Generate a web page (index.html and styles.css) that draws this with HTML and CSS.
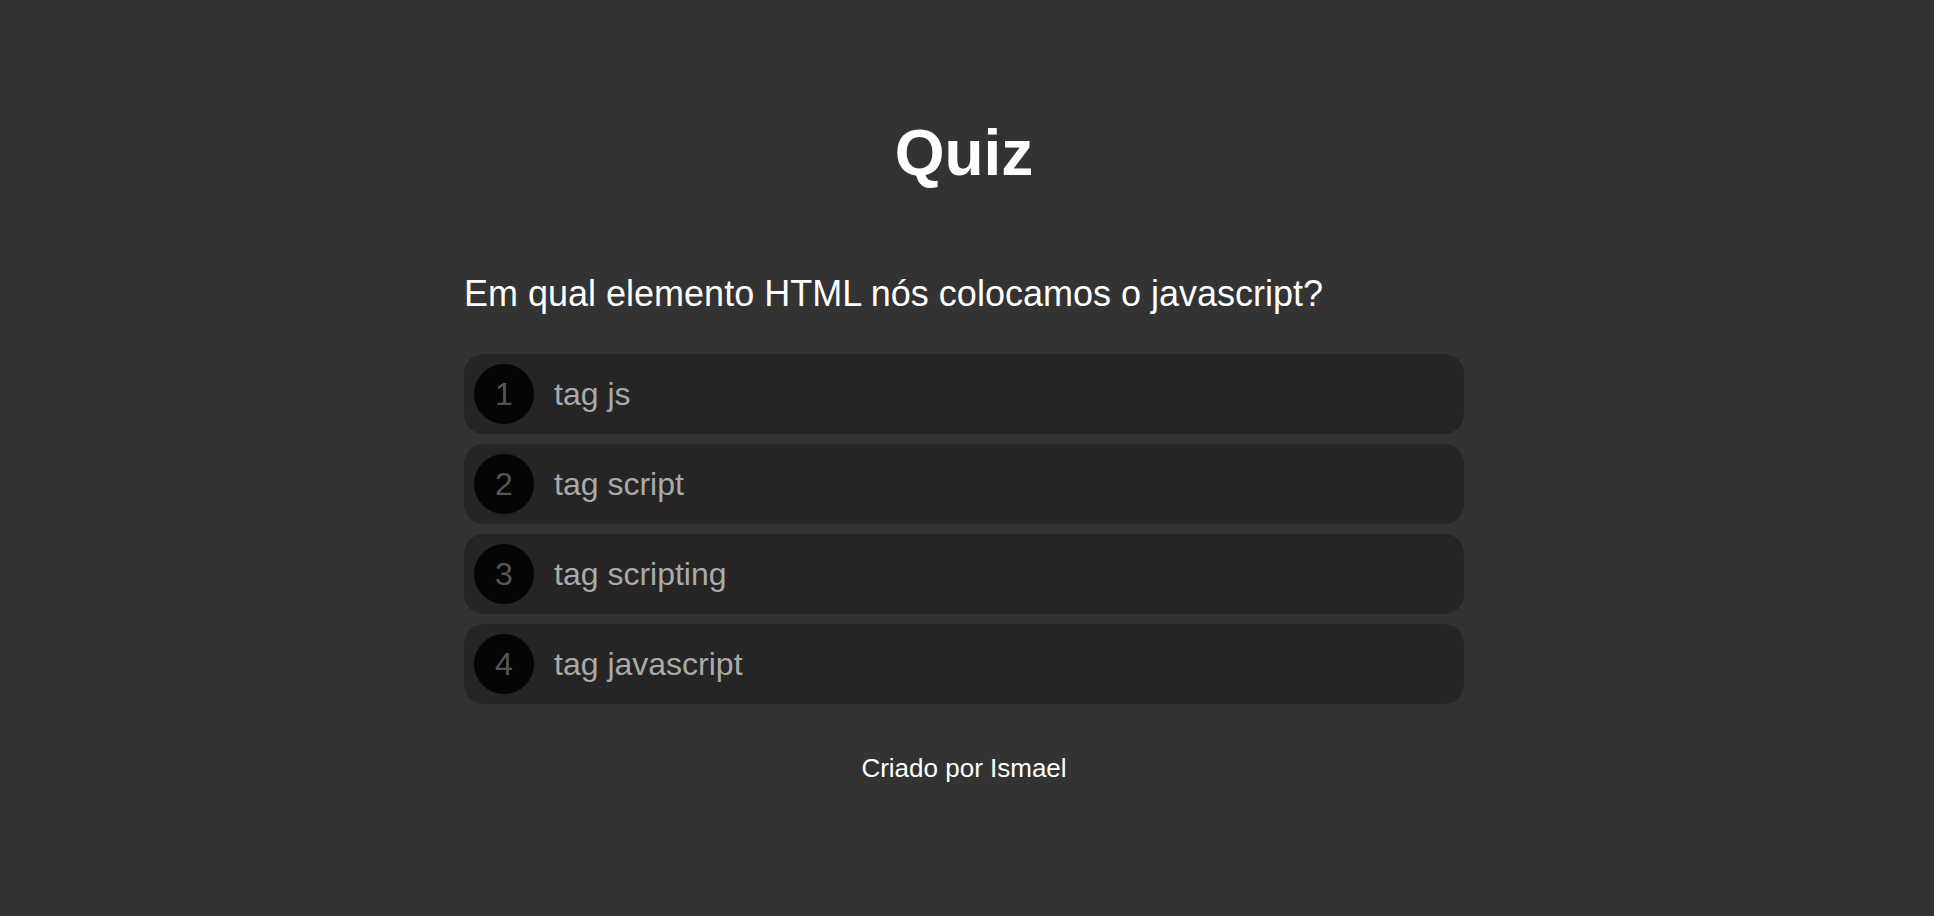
FILE: index.html
```html
<!DOCTYPE html>
<html lang="pt-BR">
<head>
<meta charset="utf-8">
<title>Quiz</title>
<link rel="stylesheet" href="styles.css">
</head>
<body>
<main class="quiz">
  <h1 class="quiz-title">Quiz</h1>
  <p class="question">Em qual elemento HTML nós colocamos o javascript?</p>
  <ul class="options">
    <li class="option"><span class="option-num">1</span><span class="option-text">tag js</span></li>
    <li class="option"><span class="option-num">2</span><span class="option-text">tag script</span></li>
    <li class="option"><span class="option-num">3</span><span class="option-text">tag scripting</span></li>
    <li class="option"><span class="option-num">4</span><span class="option-text">tag javascript</span></li>
  </ul>
  <footer class="footer">Criado por Ismael</footer>
</main>
</body>
</html>
```
FILE: styles.css
```css
html, body {
  margin: 0;
  padding: 0;
  background: #333333;
  font-family: "Liberation Sans", Arial, sans-serif;
  color: #ffffff;
}
body {
  min-height: 916px;
  padding-right: 6px;
}
.quiz {
  width: 1000px;
  margin: 0 auto;
  padding-top: 116px;
  display: flex;
  flex-direction: column;
}
.quiz-title {
  margin: 0;
  font-size: 64px;
  line-height: 74px;
  font-weight: bold;
  text-align: center;
}
.question {
  margin: 83px 0 0;
  font-size: 36px;
  line-height: 41px;
}
.options {
  list-style: none;
  margin: 40px 0 0;
  padding: 0;
  display: flex;
  flex-direction: column;
  gap: 10px;
}
.option {
  height: 80px;
  box-sizing: border-box;
  padding: 10px;
  background: #252525;
  border-radius: 20px;
  display: flex;
  align-items: center;
  gap: 20px;
}
.option-num {
  width: 60px;
  height: 60px;
  border-radius: 50%;
  background: #050505;
  color: #555555;
  font-size: 32px;
  display: flex;
  align-items: center;
  justify-content: center;
}
.option-text {
  color: #aaaaaa;
  font-size: 32px;
}
.footer {
  margin-top: 49px;
  text-align: center;
  font-size: 26px;
  line-height: 30px;
}
```
